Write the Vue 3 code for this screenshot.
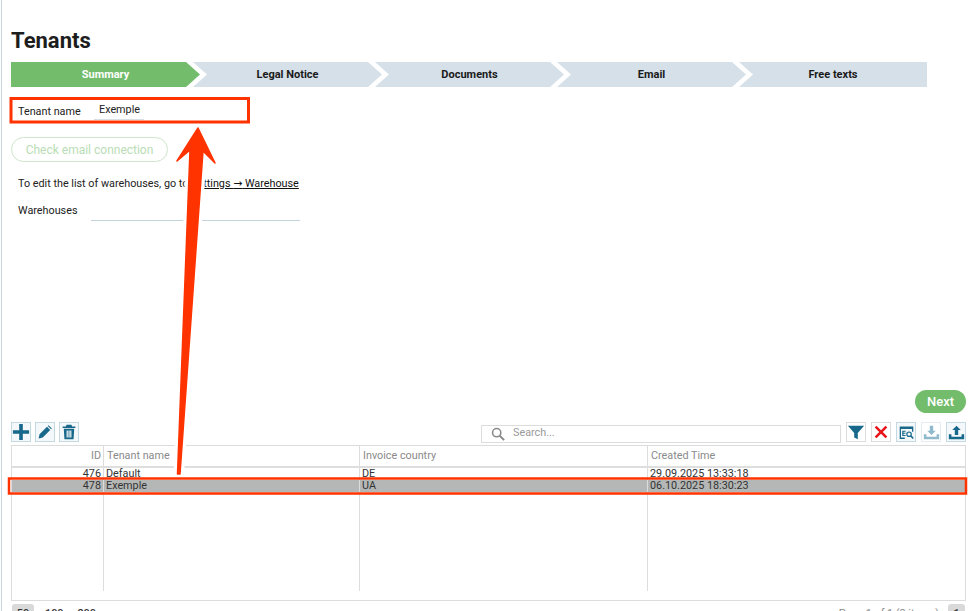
<script setup>
const steps = ['Summary', 'Legal Notice', 'Documents', 'Email', 'Free texts']
const rows = [
  { id: 476, name: 'Default', country: 'DE', time: '29.09.2025 13:33:18' },
  { id: 478, name: 'Exemple', country: 'UA', time: '06.10.2025 18:30:23', selected: true },
]
const arrow = 'M177.500 474 L190 150 L177 161 L198 128 L215 163 L203 151 L180 474 Z'
</script>

<template>
  <div class="page">
    <h1 class="title">Tenants</h1>

    <div class="wizard">
      <div v-for="(s, i) in steps" :key="s" class="step" :class="{ active: i === 0, first: i === 0, last: i === 4 }">{{ s }}</div>
    </div>

    <div class="field name-field">
      <span class="label">Tenant name</span>
      <span class="name-value">Exemple</span>
    </div>

    <button class="check">Check email connection</button>

    <p class="hint">To edit the list of warehouses, go to <a class="link">Settings <span class="arr">→</span> Warehouse</a></p>

    <div class="field wh-field">
      <span class="label">Warehouses</span>
      <span class="wh-input"></span>
    </div>

    <div class="next-row"><button class="next">Next</button></div>

    <div class="toolbar">
      <div class="tools">
        <span class="tool">
          <svg viewBox="0 0 20 20" width="18" height="18"><path d="M8 1h4v7h7v4h-7v7H8v-7H1V8h7z" fill="#17688a" /></svg>
        </span>
        <span class="tool">
          <svg viewBox="0 0 20 20" width="16" height="16"><path d="M2 18l1.2-5.2L12.5 3.5l4 4L7.200 16.800zM13.500 2.500l1-1 4 4-1 1z" fill="#17688a" /></svg>
        </span>
        <span class="tool">
          <svg viewBox="0 0 20 20" width="16" height="16"><path d="M7 1h6l1 2h4v2H2V3h4zM3.500 6h13l-.8 13H4.300zM7 8v9h1.500V8zM9.300 8v9h1.500V8zM11.500 8v9H13V8z" fill="#17688a" fill-rule="evenodd" /></svg>
        </span>
      </div>
      <div class="search">
        <svg viewBox="0 0 16 16" width="14" height="14"><circle cx="6.500" cy="6.500" r="4.700" fill="none" stroke="#8a8a8a" stroke-width="1.800" /><path d="M10 10l5 5" stroke="#8a8a8a" stroke-width="2.200" /></svg>
        <span class="search-text">Search...</span>
      </div>
      <div class="tools right">
        <span class="tool plain">
          <svg viewBox="0 0 20 20" width="18" height="18"><path d="M1 3h18l-7 8v7l-4-2v-5z" fill="#17688a" /></svg>
        </span>
        <span class="tool plain">
          <svg viewBox="0 0 20 20" width="18" height="18"><path d="M3 5l2-2 5 5 5-5 2 2-5 5 5 5-2 2-5-5-5 5-2-2 5-5z" fill="#e8141a" /></svg>
        </span>
        <span class="tool">
          <svg viewBox="0 0 20 20" width="17" height="17"><path d="M2 3h16v6h-1.500V6h-13v10H8v1.500H2z" fill="#17688a" /><path d="M5 8h4v1.200H6.400v1.200H8.800v1.200H6.400V13H9v1.200H5z" fill="#17688a" /><circle cx="13" cy="12" r="2.600" fill="none" stroke="#17688a" stroke-width="1.400" /><path d="M15 14l3 3" stroke="#17688a" stroke-width="1.800" /></svg>
        </span>
        <span class="tool faded">
          <svg viewBox="0 0 20 20" width="17" height="17"><path d="M8 2h4v6h3l-5 5-5-5h3z" fill="#8fb9cc" /><path d="M1 12h3v3h12v-3h3v6H1z" fill="#8fb9cc" /></svg>
        </span>
        <span class="tool">
          <svg viewBox="0 0 20 20" width="17" height="17"><path d="M10 2l5 5h-3v6H8V7H5z" fill="#17688a" /><path d="M1 12h3v3h12v-3h3v6H1z" fill="#17688a" /></svg>
        </span>
      </div>
    </div>

    <div class="grid">
      <div class="grid-head">
        <div class="c c-id">ID</div>
        <div class="c c-name">Tenant name</div>
        <div class="c c-country">Invoice country</div>
        <div class="c c-time">Created Time</div>
      </div>
      <div class="grid-body">
        <div v-for="r in rows" :key="r.id" class="grid-row" :class="{ selected: r.selected }">
          <div class="c c-id">{{ r.id }}</div>
          <div class="c c-name">{{ r.name }}</div>
          <div class="c c-country">{{ r.country }}</div>
          <div class="c c-time">{{ r.time }}</div>
        </div>
        <div class="grid-fill">
          <div class="c c-id"></div>
          <div class="c c-name"></div>
          <div class="c c-country"></div>
          <div class="c c-time"></div>
        </div>
      </div>
    </div>

    <div class="pager">
      <div class="sizes"><span class="size on">50</span><span class="size">100</span><span class="size">200</span></div>
      <div class="pages"><span class="info">Page 1 of 1 (2 items)</span><span class="size on one">1</span></div>
    </div>

    <svg class="marks" width="973" height="611" viewBox="0 0 973 611">
      <path :d="arrow" fill="#fff" stroke="#fff" stroke-width="8" stroke-linejoin="round" />
      <path :d="arrow" fill="#ff3300" stroke="#ff3300" stroke-width="1.500" stroke-linejoin="round" />
      <rect x="11" y="98.500" width="237.500" height="23.500" fill="none" stroke="#ff3300" stroke-width="3" />
      <rect x="9" y="478.500" width="957" height="15" fill="none" stroke="#ff3300" stroke-width="2.500" />
    </svg>
  </div>
</template>

<style scoped>
.page {
  position: relative;
  width: 973px;
  height: 611px;
  overflow: hidden;
  box-sizing: border-box;
  padding: 0 7px 0 11px;
  background: #fff;
  font-family: Roboto, "Liberation Sans", sans-serif;
  font-size: 10.800px;
  color: #222;
}
.page::before {
  content: "";
  position: absolute;
  left: 1px;
  top: 0;
  bottom: 0;
  width: 1px;
  background: #c9d8e0;
}
.title {
  margin: 0;
  padding-top: 27px;
  height: 35px;
  line-height: 27px;
  font-size: 22px;
  font-weight: 700;
  color: #1d1d1d;
  box-sizing: content-box;
}
.wizard {
  display: flex;
  width: 916px;
  height: 25px;
}
.step {
  flex: 0 0 189px;
  margin-right: -7px;
  height: 25px;
  line-height: 26px;
  text-align: center;
  font-size: 11px;
  font-weight: 700;
  background: #d5e0e8;
  color: #1a1a1a;
  clip-path: polygon(0 0, 175px 0, 100% 50%, 175px 100%, 0 100%, 14px 50%);
}
.step.first {
  clip-path: polygon(0 0, 175px 0, 100% 50%, 175px 100%, 0 100%);
}
.step.last {
  flex: 0 0 188px;
  margin-right: 0;
  clip-path: polygon(0 0, 100% 0, 100% 100%, 0 100%, 14px 50%);
}
.step.active {
  background: #72bc6c;
  color: #fff;
}
.field {
  display: flex;
  align-items: flex-start;
}
.label {
  flex: 0 0 80px;
  box-sizing: border-box;
  padding-left: 7px;
  line-height: 14px;
}
.name-field {
  height: 50px;
  padding-top: 17px;
  box-sizing: border-box;
  position: relative;
}
.name-field .label {
  padding-top: 1px;
}
.name-value {
  position: absolute;
  left: 83px;
  top: 12px;
  width: 50px;
  height: 21px;
  padding-left: 5px;
  box-sizing: border-box;
  line-height: 22px;
  border-bottom: 1px solid #d5dfe5;
  color: #222;
}
.check {
  display: block;
  width: 157px;
  height: 25px;
  padding: 0;
  border: 1px solid #cfe6cc;
  border-radius: 13px;
  background: #fff;
  font: 12px Roboto, "Liberation Sans", sans-serif;
  color: #b9ddb5;
}
.hint {
  margin: 15px 0 0 7px;
  line-height: 14px;
  height: 14px;
  white-space: nowrap;
}
.link {
  text-decoration: underline;
  color: #111;
}
.arr {
  font-family: "DejaVu Sans", sans-serif;
}
.wh-field {
  margin-top: 13px;
  height: 24px;
}
.wh-input {
  display: block;
  width: 209px;
  height: 16px;
  border-bottom: 1px solid #c3d4dd;
}
.next-row {
  display: flex;
  justify-content: flex-end;
  margin-top: 162px;
}
.next {
  width: 51px;
  height: 23px;
  padding: 0;
  border: 0;
  border-radius: 12px;
  background: #72bc6c;
  color: #fff;
  font: 500 13px Roboto, "Liberation Sans", sans-serif;
}
.toolbar {
  display: flex;
  align-items: center;
  height: 20px;
  margin-top: 9px;
  position: relative;
}
.tools {
  display: flex;
  gap: 4px;
}
.tools.right {
  gap: 5px;
}
.tool {
  display: flex;
  align-items: center;
  justify-content: center;
  width: 18px;
  height: 18px;
  border: 1px solid #c5d9e2;
  background: #f4f8fa;
}
.tool.plain {
  border-color: #dcdcdc;
  background: #fff;
}
.tool.faded {
  border-color: #e4edf1;
  background: #fff;
}
.search {
  display: flex;
  align-items: center;
  gap: 8px;
  height: 16px;
  margin: 3px 5px 0 402px;
  padding-left: 9px;
  box-sizing: content-box;
  width: 349px;
  border: 1px solid #dcdcdc;
  color: #9a9a9a;
}
.search-text {
  padding-bottom: 2px;
}
.grid {
  height: 156px;
  margin-top: 3px;
  border: 1px solid #dcdcdc;
  box-sizing: border-box;
  width: 955px;
}
.grid-head {
  display: flex;
  height: 20px;
  border-bottom: 2px solid #dedede;
  color: #8a8a8a;
  line-height: 19px;
}
.grid-body {
  display: flex;
  flex-direction: column;
}
.grid-row {
  display: flex;
  height: 12px;
  line-height: 12px;
  color: #333;
}
.grid-row .c {
  padding-left: 2px;
}
.grid-row.selected {
  background: #b4b7b5;
}
.grid-fill {
  display: flex;
  height: 99px;
}
.c {
  box-sizing: border-box;
  padding: 0 3px;
  border-right: 1px solid #dcdcdc;
  white-space: nowrap;
}
.c-id {
  width: 92px;
  text-align: right;
  padding-right: 2px;
}
.c-name {
  width: 256px;
}
.c-country {
  width: 288px;
}
.c-time {
  flex: 1;
  border-right: 0;
}
.pager {
  display: flex;
  justify-content: space-between;
  margin-top: 3px;
  color: #333;
}
.sizes {
  display: flex;
  align-items: flex-start;
  gap: 8px;
  margin-left: 1px;
}
.pages {
  display: flex;
  gap: 9px;
  align-items: flex-start;
  margin-right: 1px;
}
.info {
  padding-top: 3px;
  line-height: 14px;
  color: #8a8a8a;
}
.size {
  padding: 3px 3px 1px;
  height: 14px;
  line-height: 14px;
  font-weight: 500;
}
.size.on {
  width: 22px;
  box-sizing: border-box;
  height: 18px;
  text-align: center;
  background: #d9d9d9;
  border-radius: 3px;
}
.size.one {
  width: 17px;
  color: #333;
}
.marks {
  position: absolute;
  left: 0;
  top: 0;
  pointer-events: none;
}
</style>
